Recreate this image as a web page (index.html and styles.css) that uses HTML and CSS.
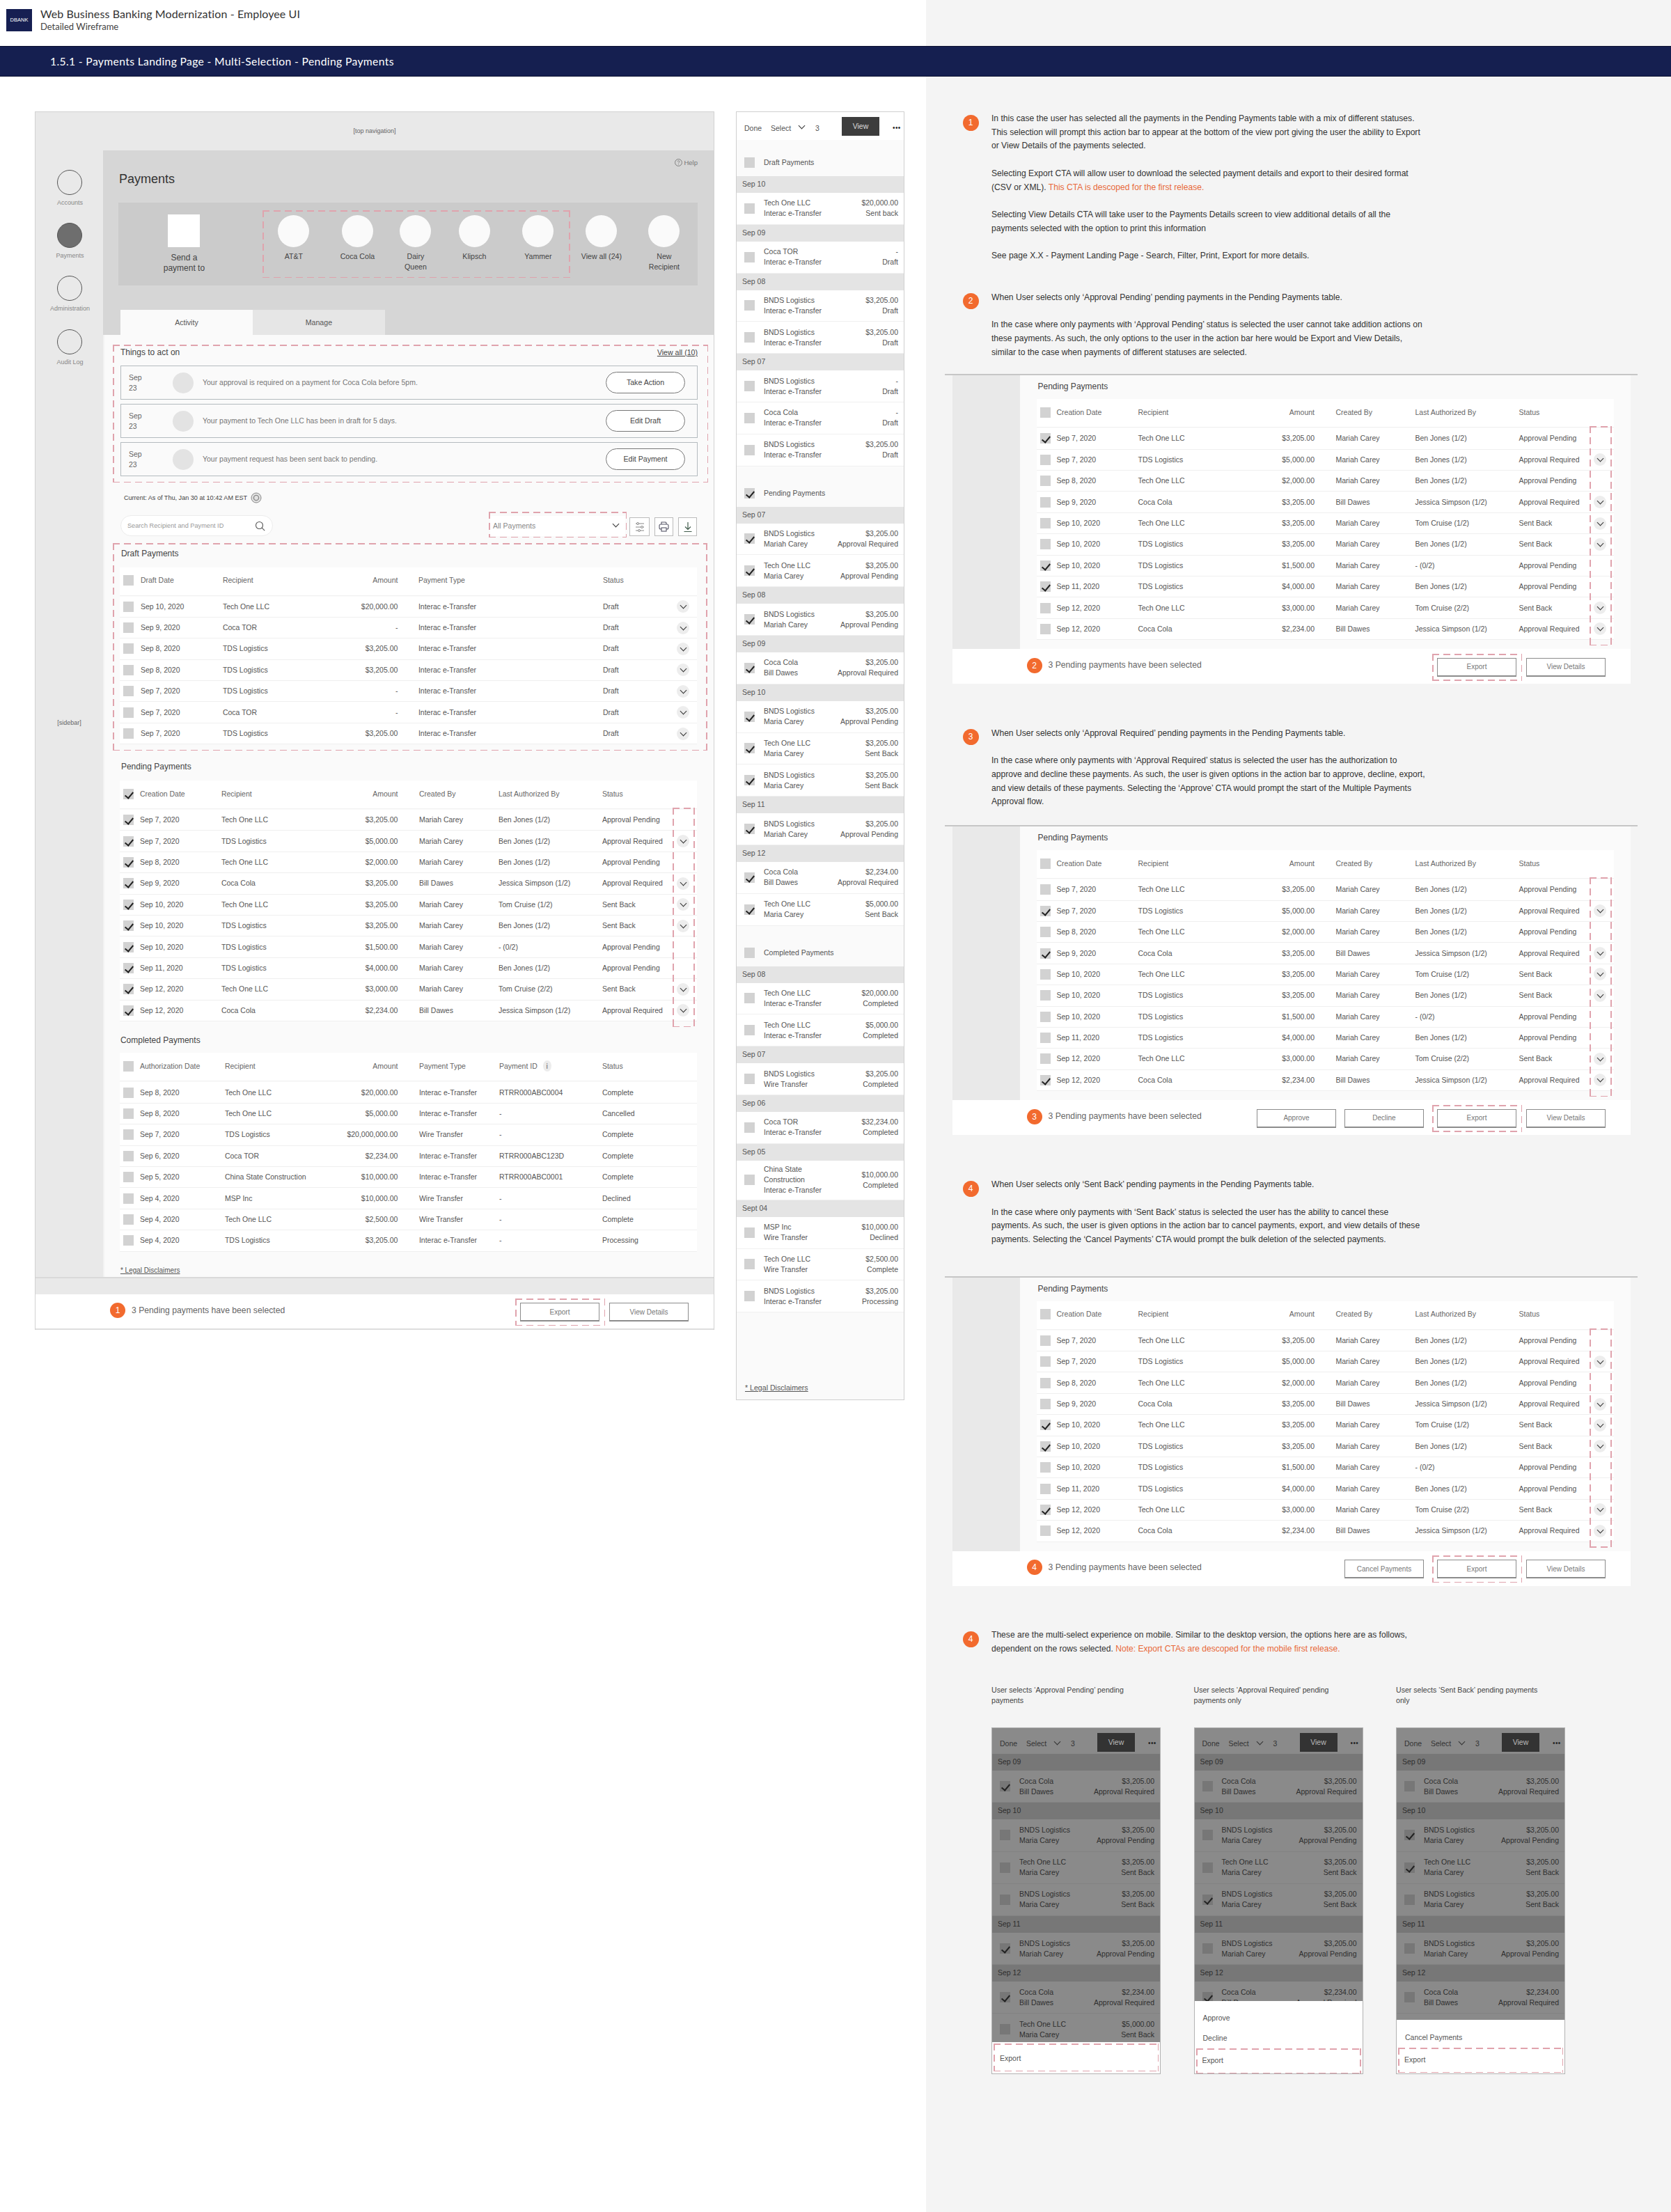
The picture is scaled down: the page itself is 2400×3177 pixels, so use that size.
FILE: index.html
```html
<!DOCTYPE html>
<html lang="en">
<head>
<meta charset="utf-8">
<title>Web Business Banking Modernization - Employee UI</title>
<link rel="stylesheet" href="styles.css">
</head>
<body>
<div class="page">
<header class="head"><div class="logo">DBANK</div><div><h1>Web Business Banking Modernization - Employee UI</h1><p>Detailed Wireframe</p></div></header>
<div class="head-r"></div>
<div class="band">1.5.1 - Payments Landing Page - Multi-Selection - Pending Payments</div>

<main class="left">
<div class="desk">
<div class="topnav">[top navigation]</div>
<div class="desk-body">
<aside class="side">
<div class="nav-item"><i></i>Accounts</div>
<div class="nav-item cur"><i></i>Payments</div>
<div class="nav-item"><i></i>Administration</div>
<div class="nav-item"><i></i>Audit Log</div>
<div class="side-note">[sidebar]</div>
</aside>
<div class="main">
<div class="hero">
<div class="help"><svg width="11" height="11" viewBox="0 0 12 12" fill="none" stroke="#777"><circle cx="6" cy="6" r="5.4"/><path d="M4.5 4.6a1.5 1.5 0 1 1 2.3 1.3c-.5.3-.8.6-.8 1.2M6 8.6v.8"/></svg>Help</div>
<h2 class="ptitle">Payments</h2>
<div class="card">
<div class="send"><i></i>Send a<br>payment to</div>
<div class="recips dash">
<div class="rcp"><i></i>AT&amp;T</div>
<div class="rcp"><i></i>Coca Cola</div>
<div class="rcp"><i></i>Dairy<br>Queen</div>
<div class="rcp"><i></i>Klipsch</div>
<div class="rcp"><i></i>Yammer</div>
</div>
<div class="rcp wide"><i></i>View all (24)</div>
<div class="rcp wide"><i></i>New<br>Recipient</div>
</div>
<div class="tabs"><div class="tab act">Activity</div><div class="tab">Manage</div></div>
</div>
<div class="panel">
<section class="things dash">
<div class="things-h"><span>Things to act on</span><a>View all (10)</a></div>
<div class="todo"><div class="td">Sep<br>23</div><i></i><p>Your approval is required on a payment for Coca Cola before 5pm.</p><button>Take Action</button></div>
<div class="todo"><div class="td">Sep<br>23</div><i></i><p>Your payment to Tech One LLC has been in draft for 5 days.</p><button>Edit Draft</button></div>
<div class="todo"><div class="td">Sep<br>23</div><i></i><p>Your payment request has been sent back to pending.</p><button>Edit Payment</button></div>
</section>
<div class="current">Current: As of Thu, Jan 30 at 10:42 AM EST <svg width="16" height="16" viewBox="0 0 16 16" fill="none" stroke="#888"><circle cx="8" cy="8" r="7" fill="#e2e2e2"/><circle cx="8" cy="8" r="3.6" stroke-width="1.4"/></svg></div>
<div class="tools">
<div class="search"><span>Search Recipient and Payment ID</span><svg width="15" height="15" viewBox="0 0 15 15" fill="none" stroke="#555" stroke-width="1.1"><circle cx="6.5" cy="6.5" r="5"/><path d="M10.2 10.2l4 4"/></svg></div>
<div class="select dash"><div class="select-in"><span>All Payments</span><b class="caret"></b></div></div>
<div class="ib first"><svg width="16" height="16" viewBox="0 0 16 16" fill="none" stroke="#888"><path d="M2 3h12M2 8h12M2 13h12"/><circle cx="5" cy="3" r="1.5" fill="#fff"/><circle cx="11" cy="8" r="1.5" fill="#fff"/><circle cx="7" cy="13" r="1.5" fill="#fff"/></svg></div>
<div class="ib"><svg width="17" height="17" viewBox="0 0 17 17" fill="none" stroke="#556" stroke-width="1.1"><path d="M5 5V2h6l1 1v2"/><rect x="2" y="5" width="13" height="7" rx="2"/><rect x="5" y="10" width="7" height="5" fill="#fff"/></svg></div>
<div class="ib"><svg width="16" height="16" viewBox="0 0 16 16" fill="none" stroke="#3f5a4a" stroke-width="1.2"><path d="M8 1v10M4 7.5L8 11.5l4-4M2.5 14.5h11"/></svg></div>
</div>
<section class="draft dash">
<h3>Draft Payments</h3>
<div class="tbl">
<div class="thead g-draft"><i class="cb"></i><span>Draft Date</span><span>Recipient</span><span class="amt">Amount</span><span>Payment Type</span><span>Status</span></div>
<div class="row g-draft"><i class="cb"></i><span>Sep 10, 2020</span><span>Tech One LLC</span><span class="amt">$20,000.00</span><span>Interac e-Transfer</span><span>Draft</span><b class="chev"></b></div>
<div class="row g-draft"><i class="cb"></i><span>Sep 9, 2020</span><span>Coca TOR</span><span class="amt">-</span><span>Interac e-Transfer</span><span>Draft</span><b class="chev"></b></div>
<div class="row g-draft"><i class="cb"></i><span>Sep 8, 2020</span><span>TDS Logistics</span><span class="amt">$3,205.00</span><span>Interac e-Transfer</span><span>Draft</span><b class="chev"></b></div>
<div class="row g-draft"><i class="cb"></i><span>Sep 8, 2020</span><span>TDS Logistics</span><span class="amt">$3,205.00</span><span>Interac e-Transfer</span><span>Draft</span><b class="chev"></b></div>
<div class="row g-draft"><i class="cb"></i><span>Sep 7, 2020</span><span>TDS Logistics</span><span class="amt">-</span><span>Interac e-Transfer</span><span>Draft</span><b class="chev"></b></div>
<div class="row g-draft"><i class="cb"></i><span>Sep 7, 2020</span><span>Coca TOR</span><span class="amt">-</span><span>Interac e-Transfer</span><span>Draft</span><b class="chev"></b></div>
<div class="row g-draft"><i class="cb"></i><span>Sep 7, 2020</span><span>TDS Logistics</span><span class="amt">$3,205.00</span><span>Interac e-Transfer</span><span>Draft</span><b class="chev"></b></div>
</div>
</section>
<section class="pending">
<h3>Pending Payments</h3>
<div class="tbl">
<div class="thead g-pend"><i class="cb on"></i><span>Creation Date</span><span>Recipient</span><span class="amt">Amount</span><span>Created By</span><span>Last Authorized By</span><span>Status</span></div>
<div class="rows">
<div class="col-mark dash"></div>
<div class="row g-pend"><i class="cb on"></i><span>Sep 7, 2020</span><span>Tech One LLC</span><span class="amt">$3,205.00</span><span>Mariah Carey</span><span>Ben Jones (1/2)</span><span>Approval Pending</span></div>
<div class="row g-pend"><i class="cb on"></i><span>Sep 7, 2020</span><span>TDS Logistics</span><span class="amt">$5,000.00</span><span>Mariah Carey</span><span>Ben Jones (1/2)</span><span>Approval Required</span><b class="chev"></b></div>
<div class="row g-pend"><i class="cb on"></i><span>Sep 8, 2020</span><span>Tech One LLC</span><span class="amt">$2,000.00</span><span>Mariah Carey</span><span>Ben Jones (1/2)</span><span>Approval Pending</span></div>
<div class="row g-pend"><i class="cb on"></i><span>Sep 9, 2020</span><span>Coca Cola</span><span class="amt">$3,205.00</span><span>Bill Dawes</span><span>Jessica Simpson (1/2)</span><span>Approval Required</span><b class="chev"></b></div>
<div class="row g-pend"><i class="cb on"></i><span>Sep 10, 2020</span><span>Tech One LLC</span><span class="amt">$3,205.00</span><span>Mariah Carey</span><span>Tom Cruise (1/2)</span><span>Sent Back</span><b class="chev"></b></div>
<div class="row g-pend"><i class="cb on"></i><span>Sep 10, 2020</span><span>TDS Logistics</span><span class="amt">$3,205.00</span><span>Mariah Carey</span><span>Ben Jones (1/2)</span><span>Sent Back</span><b class="chev"></b></div>
<div class="row g-pend"><i class="cb on"></i><span>Sep 10, 2020</span><span>TDS Logistics</span><span class="amt">$1,500.00</span><span>Mariah Carey</span><span>- (0/2)</span><span>Approval Pending</span></div>
<div class="row g-pend"><i class="cb on"></i><span>Sep 11, 2020</span><span>TDS Logistics</span><span class="amt">$4,000.00</span><span>Mariah Carey</span><span>Ben Jones (1/2)</span><span>Approval Pending</span></div>
<div class="row g-pend"><i class="cb on"></i><span>Sep 12, 2020</span><span>Tech One LLC</span><span class="amt">$3,000.00</span><span>Mariah Carey</span><span>Tom Cruise (2/2)</span><span>Sent Back</span><b class="chev"></b></div>
<div class="row g-pend"><i class="cb on"></i><span>Sep 12, 2020</span><span>Coca Cola</span><span class="amt">$2,234.00</span><span>Bill Dawes</span><span>Jessica Simpson (1/2)</span><span>Approval Required</span><b class="chev"></b></div>
</div>
</div>
</section>
<section class="completed">
<h3>Completed Payments</h3>
<div class="tbl">
<div class="thead g-comp"><i class="cb"></i><span>Authorization Date</span><span>Recipient</span><span class="amt">Amount</span><span>Payment Type</span><span>Payment ID <em class="info">i</em></span><span>Status</span></div>
<div class="row g-comp"><i class="cb"></i><span>Sep 8, 2020</span><span>Tech One LLC</span><span class="amt">$20,000.00</span><span>Interac e-Transfer</span><span>RTRR000ABC0004</span><span>Complete</span></div>
<div class="row g-comp"><i class="cb"></i><span>Sep 8, 2020</span><span>Tech One LLC</span><span class="amt">$5,000.00</span><span>Interac e-Transfer</span><span>-</span><span>Cancelled</span></div>
<div class="row g-comp"><i class="cb"></i><span>Sep 7, 2020</span><span>TDS Logistics</span><span class="amt">$20,000,000.00</span><span>Wire Transfer</span><span>-</span><span>Complete</span></div>
<div class="row g-comp"><i class="cb"></i><span>Sep 6, 2020</span><span>Coca TOR</span><span class="amt">$2,234.00</span><span>Interac e-Transfer</span><span>RTRR000ABC123D</span><span>Complete</span></div>
<div class="row g-comp"><i class="cb"></i><span>Sep 5, 2020</span><span>China State Construction</span><span class="amt">$10,000.00</span><span>Interac e-Transfer</span><span>RTRR000ABC0001</span><span>Complete</span></div>
<div class="row g-comp"><i class="cb"></i><span>Sep 4, 2020</span><span>MSP Inc</span><span class="amt">$10,000.00</span><span>Wire Transfer</span><span>-</span><span>Declined</span></div>
<div class="row g-comp"><i class="cb"></i><span>Sep 4, 2020</span><span>Tech One LLC</span><span class="amt">$2,500.00</span><span>Wire Transfer</span><span>-</span><span>Complete</span></div>
<div class="row g-comp"><i class="cb"></i><span>Sep 4, 2020</span><span>TDS Logistics</span><span class="amt">$3,205.00</span><span>Interac e-Transfer</span><span>-</span><span>Processing</span></div>
</div>
</section>
<a class="legal">* Legal Disclaimers</a>
</div>
</div>
</div>
<div class="strip"></div>
<div class="abar"><span class="badge">1</span><span class="abar-t">3 Pending payments have been selected</span><div class="abtns"><div class="bwrap dash"><button>Export</button></div><button>View Details</button></div></div>
</div>

<div class="phone">
<div class="mhead"><span class="m-done">Done</span><span class="m-sel">Select</span><b class="caret m-car"></b><span class="m-n">3</span><span class="m-view">View</span><span class="m-dots">•••</span></div>
<div class="msec"><i class="cb"></i>Draft Payments</div>
<div class="mband">Sep 10</div>
<div class="mrow"><i class="cb"></i><div>Tech One LLC<br>Interac e-Transfer</div><div class="r">$20,000.00<br>Sent back</div></div>
<div class="mband">Sep 09</div>
<div class="mrow"><i class="cb"></i><div>Coca TOR<br>Interac e-Transfer</div><div class="r">-<br>Draft</div></div>
<div class="mband">Sep 08</div>
<div class="mrow"><i class="cb"></i><div>BNDS Logistics<br>Interac e-Transfer</div><div class="r">$3,205.00<br>Draft</div></div>
<div class="mrow"><i class="cb"></i><div>BNDS Logistics<br>Interac e-Transfer</div><div class="r">$3,205.00<br>Draft</div></div>
<div class="mband">Sep 07</div>
<div class="mrow"><i class="cb"></i><div>BNDS Logistics<br>Interac e-Transfer</div><div class="r">-<br>Draft</div></div>
<div class="mrow"><i class="cb"></i><div>Coca Cola<br>Interac e-Transfer</div><div class="r">-<br>Draft</div></div>
<div class="mrow"><i class="cb"></i><div>BNDS Logistics<br>Interac e-Transfer</div><div class="r">$3,205.00<br>Draft</div></div>
<div class="msec tall"><i class="cb on"></i>Pending Payments</div>
<div class="mband">Sep 07</div>
<div class="mrow"><i class="cb on"></i><div>BNDS Logistics<br>Mariah Carey</div><div class="r">$3,205.00<br>Approval Required</div></div>
<div class="mrow"><i class="cb on"></i><div>Tech One LLC<br>Maria Carey</div><div class="r">$3,205.00<br>Approval Pending</div></div>
<div class="mband">Sep 08</div>
<div class="mrow"><i class="cb on"></i><div>BNDS Logistics<br>Mariah Carey</div><div class="r">$3,205.00<br>Approval Pending</div></div>
<div class="mband">Sep 09</div>
<div class="mrow"><i class="cb on"></i><div>Coca Cola<br>Bill Dawes</div><div class="r">$3,205.00<br>Approval Required</div></div>
<div class="mband">Sep 10</div>
<div class="mrow"><i class="cb on"></i><div>BNDS Logistics<br>Maria Carey</div><div class="r">$3,205.00<br>Approval Pending</div></div>
<div class="mrow"><i class="cb on"></i><div>Tech One LLC<br>Maria Carey</div><div class="r">$3,205.00<br>Sent Back</div></div>
<div class="mrow"><i class="cb on"></i><div>BNDS Logistics<br>Maria Carey</div><div class="r">$3,205.00<br>Sent Back</div></div>
<div class="mband">Sep 11</div>
<div class="mrow"><i class="cb on"></i><div>BNDS Logistics<br>Mariah Carey</div><div class="r">$3,205.00<br>Approval Pending</div></div>
<div class="mband">Sep 12</div>
<div class="mrow"><i class="cb on"></i><div>Coca Cola<br>Bill Dawes</div><div class="r">$2,234.00<br>Approval Required</div></div>
<div class="mrow"><i class="cb on"></i><div>Tech One LLC<br>Maria Carey</div><div class="r">$5,000.00<br>Sent Back</div></div>
<div class="msec tall"><i class="cb"></i>Completed Payments</div>
<div class="mband">Sep 08</div>
<div class="mrow"><i class="cb"></i><div>Tech One LLC<br>Interac e-Transfer</div><div class="r">$20,000.00<br>Completed</div></div>
<div class="mrow"><i class="cb"></i><div>Tech One LLC<br>Interac e-Transfer</div><div class="r">$5,000.00<br>Completed</div></div>
<div class="mband">Sep 07</div>
<div class="mrow"><i class="cb"></i><div>BNDS Logistics<br>Wire Transfer</div><div class="r">$3,205.00<br>Completed</div></div>
<div class="mband">Sep 06</div>
<div class="mrow"><i class="cb"></i><div>Coca TOR<br>Interac e-Transfer</div><div class="r">$32,234.00<br>Completed</div></div>
<div class="mband">Sep 05</div>
<div class="mrow three"><i class="cb"></i><div>China State<br>Construction<br>Interac e-Transfer</div><div class="r">$10,000.00<br>Completed</div></div>
<div class="mband">Sept 04</div>
<div class="mrow"><i class="cb"></i><div>MSP Inc<br>Wire Transfer</div><div class="r">$10,000.00<br>Declined</div></div>
<div class="mrow"><i class="cb"></i><div>Tech One LLC<br>Wire Transfer</div><div class="r">$2,500.00<br>Complete</div></div>
<div class="mrow"><i class="cb"></i><div>BNDS Logistics<br>Interac e-Transfer</div><div class="r">$3,205.00<br>Processing</div></div>
<a class="mlegal">* Legal Disclaimers</a>
</div>
</main>

<aside class="right">
<div class="note n1"><span class="badge">1</span><p>In this case the user has selected all the payments in the Pending Payments table with a mix of different statuses.<br>This selection will prompt this action bar to appear at the bottom of the view port giving the user the ability to Export<br>or View Details of the payments selected.<br><br>Selecting Export CTA will allow user to download the selected payment details and export to their desired format<br>(CSV or XML). <em>This CTA is descoped for the first release.</em><br><br>Selecting View Details CTA will take user to the Payments Details screen to view additional details of all the<br>payments selected with the option to print this information<br><br>See page X.X - Payment Landing Page - Search, Filter, Print, Export for more details.</p></div>
<div class="note n2"><span class="badge">2</span><p>When User selects only ‘Approval Pending’ pending payments in the Pending Payments table.<br><br>In the case where only payments with ‘Approval Pending’ status is selected the user cannot take addition actions on<br>these payments. As such, the only options to the user in the action bar here would be Export and View Details,<br>similar to the case when payments of different statuses are selected.</p></div>
<div class="mock m2">
<div class="mock-body"><div class="mock-side"></div><div class="mock-main">
<h3>Pending Payments</h3>
<div class="tbl">
<div class="thead g-pend"><i class="cb"></i><span>Creation Date</span><span>Recipient</span><span class="amt">Amount</span><span>Created By</span><span>Last Authorized By</span><span>Status</span></div>
<div class="rows">
<div class="col-mark dash"></div>
<div class="row g-pend"><i class="cb on"></i><span>Sep 7, 2020</span><span>Tech One LLC</span><span class="amt">$3,205.00</span><span>Mariah Carey</span><span>Ben Jones (1/2)</span><span>Approval Pending</span></div>
<div class="row g-pend"><i class="cb"></i><span>Sep 7, 2020</span><span>TDS Logistics</span><span class="amt">$5,000.00</span><span>Mariah Carey</span><span>Ben Jones (1/2)</span><span>Approval Required</span><b class="chev"></b></div>
<div class="row g-pend"><i class="cb"></i><span>Sep 8, 2020</span><span>Tech One LLC</span><span class="amt">$2,000.00</span><span>Mariah Carey</span><span>Ben Jones (1/2)</span><span>Approval Pending</span></div>
<div class="row g-pend"><i class="cb"></i><span>Sep 9, 2020</span><span>Coca Cola</span><span class="amt">$3,205.00</span><span>Bill Dawes</span><span>Jessica Simpson (1/2)</span><span>Approval Required</span><b class="chev"></b></div>
<div class="row g-pend"><i class="cb"></i><span>Sep 10, 2020</span><span>Tech One LLC</span><span class="amt">$3,205.00</span><span>Mariah Carey</span><span>Tom Cruise (1/2)</span><span>Sent Back</span><b class="chev"></b></div>
<div class="row g-pend"><i class="cb"></i><span>Sep 10, 2020</span><span>TDS Logistics</span><span class="amt">$3,205.00</span><span>Mariah Carey</span><span>Ben Jones (1/2)</span><span>Sent Back</span><b class="chev"></b></div>
<div class="row g-pend"><i class="cb on"></i><span>Sep 10, 2020</span><span>TDS Logistics</span><span class="amt">$1,500.00</span><span>Mariah Carey</span><span>- (0/2)</span><span>Approval Pending</span></div>
<div class="row g-pend"><i class="cb on"></i><span>Sep 11, 2020</span><span>TDS Logistics</span><span class="amt">$4,000.00</span><span>Mariah Carey</span><span>Ben Jones (1/2)</span><span>Approval Pending</span></div>
<div class="row g-pend"><i class="cb"></i><span>Sep 12, 2020</span><span>Tech One LLC</span><span class="amt">$3,000.00</span><span>Mariah Carey</span><span>Tom Cruise (2/2)</span><span>Sent Back</span><b class="chev"></b></div>
<div class="row g-pend"><i class="cb"></i><span>Sep 12, 2020</span><span>Coca Cola</span><span class="amt">$2,234.00</span><span>Bill Dawes</span><span>Jessica Simpson (1/2)</span><span>Approval Required</span><b class="chev"></b></div>
</div></div>
</div></div>
<div class="abar"><span class="badge">2</span><span class="abar-t">3 Pending payments have been selected</span><div class="abtns"><div class="bwrap dash"><button>Export</button></div><button>View Details</button></div></div>
</div>
<div class="note n3"><span class="badge">3</span><p>When User selects only ‘Approval Required’ pending payments in the Pending Payments table.<br><br>In the case where only payments with ‘Approval Required’ status is selected the user has the authorization to<br>approve and decline these payments. As such, the user is given options in the action bar to approve, decline, export,<br>and view details of these payments. Selecting the ‘Approve’ CTA would prompt the start of the Multiple Payments<br>Approval flow.</p></div>
<div class="mock m3">
<div class="mock-body"><div class="mock-side"></div><div class="mock-main">
<h3>Pending Payments</h3>
<div class="tbl">
<div class="thead g-pend"><i class="cb"></i><span>Creation Date</span><span>Recipient</span><span class="amt">Amount</span><span>Created By</span><span>Last Authorized By</span><span>Status</span></div>
<div class="rows">
<div class="col-mark dash"></div>
<div class="row g-pend"><i class="cb"></i><span>Sep 7, 2020</span><span>Tech One LLC</span><span class="amt">$3,205.00</span><span>Mariah Carey</span><span>Ben Jones (1/2)</span><span>Approval Pending</span></div>
<div class="row g-pend"><i class="cb on"></i><span>Sep 7, 2020</span><span>TDS Logistics</span><span class="amt">$5,000.00</span><span>Mariah Carey</span><span>Ben Jones (1/2)</span><span>Approval Required</span><b class="chev"></b></div>
<div class="row g-pend"><i class="cb"></i><span>Sep 8, 2020</span><span>Tech One LLC</span><span class="amt">$2,000.00</span><span>Mariah Carey</span><span>Ben Jones (1/2)</span><span>Approval Pending</span></div>
<div class="row g-pend"><i class="cb on"></i><span>Sep 9, 2020</span><span>Coca Cola</span><span class="amt">$3,205.00</span><span>Bill Dawes</span><span>Jessica Simpson (1/2)</span><span>Approval Required</span><b class="chev"></b></div>
<div class="row g-pend"><i class="cb"></i><span>Sep 10, 2020</span><span>Tech One LLC</span><span class="amt">$3,205.00</span><span>Mariah Carey</span><span>Tom Cruise (1/2)</span><span>Sent Back</span><b class="chev"></b></div>
<div class="row g-pend"><i class="cb"></i><span>Sep 10, 2020</span><span>TDS Logistics</span><span class="amt">$3,205.00</span><span>Mariah Carey</span><span>Ben Jones (1/2)</span><span>Sent Back</span><b class="chev"></b></div>
<div class="row g-pend"><i class="cb"></i><span>Sep 10, 2020</span><span>TDS Logistics</span><span class="amt">$1,500.00</span><span>Mariah Carey</span><span>- (0/2)</span><span>Approval Pending</span></div>
<div class="row g-pend"><i class="cb"></i><span>Sep 11, 2020</span><span>TDS Logistics</span><span class="amt">$4,000.00</span><span>Mariah Carey</span><span>Ben Jones (1/2)</span><span>Approval Pending</span></div>
<div class="row g-pend"><i class="cb"></i><span>Sep 12, 2020</span><span>Tech One LLC</span><span class="amt">$3,000.00</span><span>Mariah Carey</span><span>Tom Cruise (2/2)</span><span>Sent Back</span><b class="chev"></b></div>
<div class="row g-pend"><i class="cb on"></i><span>Sep 12, 2020</span><span>Coca Cola</span><span class="amt">$2,234.00</span><span>Bill Dawes</span><span>Jessica Simpson (1/2)</span><span>Approval Required</span><b class="chev"></b></div>
</div></div>
</div></div>
<div class="abar"><span class="badge">3</span><span class="abar-t">3 Pending payments have been selected</span><div class="abtns"><button>Approve</button><button>Decline</button><div class="bwrap dash"><button>Export</button></div><button>View Details</button></div></div>
</div>
<div class="note n4"><span class="badge">4</span><p>When User selects only ‘Sent Back’ pending payments in the Pending Payments table.<br><br>In the case where only payments with ‘Sent Back’ status is selected the user has the ability to cancel these<br>payments. As such, the user is given options in the action bar to cancel payments, export, and view details of these<br>payments. Selecting the ‘Cancel Payments’ CTA would prompt the bulk deletion of the selected payments.</p></div>
<div class="mock m4">
<div class="mock-body"><div class="mock-side"></div><div class="mock-main">
<h3>Pending Payments</h3>
<div class="tbl">
<div class="thead g-pend"><i class="cb"></i><span>Creation Date</span><span>Recipient</span><span class="amt">Amount</span><span>Created By</span><span>Last Authorized By</span><span>Status</span></div>
<div class="rows">
<div class="col-mark dash"></div>
<div class="row g-pend"><i class="cb"></i><span>Sep 7, 2020</span><span>Tech One LLC</span><span class="amt">$3,205.00</span><span>Mariah Carey</span><span>Ben Jones (1/2)</span><span>Approval Pending</span></div>
<div class="row g-pend"><i class="cb"></i><span>Sep 7, 2020</span><span>TDS Logistics</span><span class="amt">$5,000.00</span><span>Mariah Carey</span><span>Ben Jones (1/2)</span><span>Approval Required</span><b class="chev"></b></div>
<div class="row g-pend"><i class="cb"></i><span>Sep 8, 2020</span><span>Tech One LLC</span><span class="amt">$2,000.00</span><span>Mariah Carey</span><span>Ben Jones (1/2)</span><span>Approval Pending</span></div>
<div class="row g-pend"><i class="cb"></i><span>Sep 9, 2020</span><span>Coca Cola</span><span class="amt">$3,205.00</span><span>Bill Dawes</span><span>Jessica Simpson (1/2)</span><span>Approval Required</span><b class="chev"></b></div>
<div class="row g-pend"><i class="cb on"></i><span>Sep 10, 2020</span><span>Tech One LLC</span><span class="amt">$3,205.00</span><span>Mariah Carey</span><span>Tom Cruise (1/2)</span><span>Sent Back</span><b class="chev"></b></div>
<div class="row g-pend"><i class="cb on"></i><span>Sep 10, 2020</span><span>TDS Logistics</span><span class="amt">$3,205.00</span><span>Mariah Carey</span><span>Ben Jones (1/2)</span><span>Sent Back</span><b class="chev"></b></div>
<div class="row g-pend"><i class="cb"></i><span>Sep 10, 2020</span><span>TDS Logistics</span><span class="amt">$1,500.00</span><span>Mariah Carey</span><span>- (0/2)</span><span>Approval Pending</span></div>
<div class="row g-pend"><i class="cb"></i><span>Sep 11, 2020</span><span>TDS Logistics</span><span class="amt">$4,000.00</span><span>Mariah Carey</span><span>Ben Jones (1/2)</span><span>Approval Pending</span></div>
<div class="row g-pend"><i class="cb on"></i><span>Sep 12, 2020</span><span>Tech One LLC</span><span class="amt">$3,000.00</span><span>Mariah Carey</span><span>Tom Cruise (2/2)</span><span>Sent Back</span><b class="chev"></b></div>
<div class="row g-pend"><i class="cb"></i><span>Sep 12, 2020</span><span>Coca Cola</span><span class="amt">$2,234.00</span><span>Bill Dawes</span><span>Jessica Simpson (1/2)</span><span>Approval Required</span><b class="chev"></b></div>
</div></div>
</div></div>
<div class="abar"><span class="badge">4</span><span class="abar-t">3 Pending payments have been selected</span><div class="abtns"><button>Cancel Payments</button><div class="bwrap dash"><button>Export</button></div><button>View Details</button></div></div>
</div>
<div class="note n5"><span class="badge">4</span><p>These are the multi-select experience on mobile. Similar to the desktop version, the options here are as follows,<br>dependent on the rows selected. <em>Note: Export CTAs are descoped for the mobile first release.</em></p></div>
<div class="mobiles">
<div class="mcol">
<p class="mlabel">User selects ‘Approval Pending’ pending<br>payments</p>
<div class="ophone">
<div class="mhead"><span class="m-done">Done</span><span class="m-sel">Select</span><b class="caret m-car"></b><span class="m-n">3</span><span class="m-view">View</span><span class="m-dots">•••</span></div>
<div class="mband">Sep 09</div>
<div class="mrow"><i class="cb on"></i><div>Coca Cola<br>Bill Dawes</div><div class="r">$3,205.00<br>Approval Required</div></div>
<div class="mband">Sep 10</div>
<div class="mrow"><i class="cb"></i><div>BNDS Logistics<br>Maria Carey</div><div class="r">$3,205.00<br>Approval Pending</div></div>
<div class="mrow"><i class="cb"></i><div>Tech One LLC<br>Maria Carey</div><div class="r">$3,205.00<br>Sent Back</div></div>
<div class="mrow"><i class="cb"></i><div>BNDS Logistics<br>Maria Carey</div><div class="r">$3,205.00<br>Sent Back</div></div>
<div class="mband">Sep 11</div>
<div class="mrow"><i class="cb on"></i><div>BNDS Logistics<br>Mariah Carey</div><div class="r">$3,205.00<br>Approval Pending</div></div>
<div class="mband">Sep 12</div>
<div class="mrow"><i class="cb on"></i><div>Coca Cola<br>Bill Dawes</div><div class="r">$2,234.00<br>Approval Required</div></div>
<div class="mrow"><i class="cb"></i><div>Tech One LLC<br>Maria Carey</div><div class="r">$5,000.00<br>Sent Back</div></div>
<div class="sheet"><div class="sheet-x dash">Export</div></div>
</div>
</div>
<div class="mcol">
<p class="mlabel">User selects ‘Approval Required’ pending<br>payments only</p>
<div class="ophone">
<div class="mhead"><span class="m-done">Done</span><span class="m-sel">Select</span><b class="caret m-car"></b><span class="m-n">3</span><span class="m-view">View</span><span class="m-dots">•••</span></div>
<div class="mband">Sep 09</div>
<div class="mrow"><i class="cb"></i><div>Coca Cola<br>Bill Dawes</div><div class="r">$3,205.00<br>Approval Required</div></div>
<div class="mband">Sep 10</div>
<div class="mrow"><i class="cb"></i><div>BNDS Logistics<br>Maria Carey</div><div class="r">$3,205.00<br>Approval Pending</div></div>
<div class="mrow"><i class="cb"></i><div>Tech One LLC<br>Maria Carey</div><div class="r">$3,205.00<br>Sent Back</div></div>
<div class="mrow"><i class="cb on"></i><div>BNDS Logistics<br>Maria Carey</div><div class="r">$3,205.00<br>Sent Back</div></div>
<div class="mband">Sep 11</div>
<div class="mrow"><i class="cb"></i><div>BNDS Logistics<br>Mariah Carey</div><div class="r">$3,205.00<br>Approval Pending</div></div>
<div class="mband">Sep 12</div>
<div class="mrow"><i class="cb on"></i><div>Coca Cola<br>Bill Dawes</div><div class="r">$2,234.00<br>Approval Required</div></div>
<div class="mrow"><i class="cb"></i><div>Tech One LLC<br>Maria Carey</div><div class="r">$5,000.00<br>Sent Back</div></div>
<div class="sheet tall2"><div class="sheet-i">Approve</div><div class="sheet-i">Decline</div><div class="sheet-x dash">Export</div></div>
</div>
</div>
<div class="mcol">
<p class="mlabel">User selects ‘Sent Back’ pending payments<br>only</p>
<div class="ophone">
<div class="mhead"><span class="m-done">Done</span><span class="m-sel">Select</span><b class="caret m-car"></b><span class="m-n">3</span><span class="m-view">View</span><span class="m-dots">•••</span></div>
<div class="mband">Sep 09</div>
<div class="mrow"><i class="cb"></i><div>Coca Cola<br>Bill Dawes</div><div class="r">$3,205.00<br>Approval Required</div></div>
<div class="mband">Sep 10</div>
<div class="mrow"><i class="cb on"></i><div>BNDS Logistics<br>Maria Carey</div><div class="r">$3,205.00<br>Approval Pending</div></div>
<div class="mrow"><i class="cb on"></i><div>Tech One LLC<br>Maria Carey</div><div class="r">$3,205.00<br>Sent Back</div></div>
<div class="mrow"><i class="cb"></i><div>BNDS Logistics<br>Maria Carey</div><div class="r">$3,205.00<br>Sent Back</div></div>
<div class="mband">Sep 11</div>
<div class="mrow"><i class="cb"></i><div>BNDS Logistics<br>Mariah Carey</div><div class="r">$3,205.00<br>Approval Pending</div></div>
<div class="mband">Sep 12</div>
<div class="mrow"><i class="cb"></i><div>Coca Cola<br>Bill Dawes</div><div class="r">$2,234.00<br>Approval Required</div></div>
<div class="mrow"><i class="cb"></i><div>Tech One LLC<br>Maria Carey</div><div class="r">$5,000.00<br>Sent Back</div></div>
<div class="sheet tall1"><div class="sheet-i">Cancel Payments</div><div class="sheet-x dash">Export</div></div>
</div>
</div>
</div>
</aside>
</div>
</body>
</html>
```

FILE: styles.css
```css
*{box-sizing:border-box}
html,body{margin:0;background:#fff}
body{font:10.5px/15px "Liberation Sans",Arial,sans-serif;color:#555}
h1,h2,h3,p{margin:0;font-weight:400}
i,b,em{font-style:normal;font-weight:400}
button{font:inherit;background:#fff;color:#777;padding:0}
.page{width:2400px;height:3177px;display:grid;grid-template-columns:1330px 1070px;grid-template-rows:66px 44px 1fr;overflow:hidden}

.dash{--d:#e0a3ad;background-image:linear-gradient(90deg,var(--d) 10px,transparent 0),linear-gradient(90deg,var(--d) 10px,transparent 0),linear-gradient(var(--d) 10px,transparent 0),linear-gradient(var(--d) 10px,transparent 0);background-size:16px 1.5px,16px 1.5px,1.5px 16px,1.5px 16px;background-position:0 0,0 100%,0 0,100% 0;background-repeat:repeat-x,repeat-x,repeat-y,repeat-y}

.head{display:flex;align-items:flex-start;padding:13px 0 0 9px;gap:12px;font-family:Lato,sans-serif;color:#333}
.logo{width:37px;height:32px;background:#161f52;color:#fff;font:7.5px/32px "Liberation Sans",sans-serif;text-align:center}
.head h1{font-size:16px;line-height:17px;letter-spacing:.1px;margin-top:-2px}
.head p{font-size:13px;line-height:16px;margin-top:2px;color:#444}
.head-r{background:#f4f4f4}
.band{grid-column:1/3;background:#151f50;border-top:1px solid #0a0f30;border-bottom:1px solid #0a0f30;color:#fff;font:15.7px/42px Lato,sans-serif;padding-left:72px;letter-spacing:.35px}

.left{padding:50px 0 0 50px;display:flex;align-items:flex-start}
.right{background:#f4f4f4;color:#333;padding-top:51px;font-size:12.1px;line-height:19.7px}

.desk{width:976px;border:1px solid #d2d2d2;border-width:1px 1px 0;display:flex;flex-direction:column}
.topnav{height:55px;background:#e9e9e9;text-align:center;font-size:9px;line-height:54px;color:#666}
.desk-body{display:flex}
.side{width:97px;background:#e9e9e9;padding:28px 0 0 2px;color:#888;font-size:9px;text-align:center}
.nav-item{height:53px;margin-bottom:23.2px;line-height:12px;display:flex;flex-direction:column;align-items:center}
.nav-item i{width:36px;height:36px;border:1px solid #555;border-radius:50%;margin-bottom:5px}
.nav-item.cur i{background:#6e6e6e}
.side-note{margin:506px 0 0 -2px;line-height:12px;color:#666}
.main{width:878px}
.hero{height:265px;background:#d6d6d6;padding:10px 23px 0 22px}
.help{height:14px;display:flex;justify-content:flex-end;align-items:center;gap:2px;font-size:9.5px;color:#777}
.ptitle{font-size:18px;line-height:22px;margin:6px 0 0 1px;color:#333}
.card{display:flex;height:119px;margin-top:23px;background:#cbcbcb;align-items:flex-start;color:#444;text-align:center}
.send{width:207px;padding:17px 18px 0 0;font-size:12px;line-height:15px}
.send i{display:block;width:46px;height:47px;background:#fff;margin:0 auto 8px}
.recips{display:grid;grid-template-columns:90px 93px 74px 95px 88px;width:442px;height:97px;margin-top:11px;padding-top:7px}
.rcp i{display:block;width:45px;height:46px;border-radius:50%;background:#fafafa;margin:0 auto 6px}
.rcp{font-size:10.6px;line-height:15px}
.wide{width:90px;padding-top:18px}
.tabs{display:flex;margin:35px 0 0 3px}
.tab{width:190px;height:36px;background:#e6e6e6;text-align:center;line-height:36px;font-size:10.6px;color:#555}
.tab.act{background:#fafafa}

.panel{height:1353px;background:#fafafa;padding:14px 8px 0 14px;border-left:2px solid #f2f2f2}
.things{padding:3px 15px 9px 11px;height:198px;margin-left:-2px}
.things-h{display:flex;justify-content:space-between;align-items:center;height:16px;margin:0 0 11px;font-size:12px;color:#444}
.things-h a,.legal,.mlegal{text-decoration:underline;font-size:10.6px}
.todo{height:49px;margin-bottom:6px;border:1px solid #b4bbbf;display:flex;align-items:center;padding-left:11px;font-size:10.5px;color:#777}
.td{width:63px;line-height:15px;color:#666}
.todo i{width:30px;height:30px;border-radius:50%;background:#e3e3e3;margin-right:13px}
.todo p{flex:1}
.todo button{width:114px;height:31px;border:1px solid #777;border-radius:16px;margin-right:17px;color:#444;font-size:10.6px}
.current{height:14px;margin:15px 0 0 14px;display:flex;align-items:center;gap:5px;font-size:9.1px;color:#444}
.tools{display:flex;align-items:flex-start;height:37px;margin:13px 16px 0 9px}
.search{width:219px;height:30px;margin-top:5px;border:1px solid #ececec;border-radius:15px;background:#fff;display:flex;align-items:center;justify-content:space-between;padding:0 10px 0 9px;font-size:9.2px;color:#999}
.select{margin-left:auto;width:198px;height:37px;padding:6px 2px 2px}
.select-in{height:29px;background:#fff;display:flex;align-items:center;justify-content:space-between;padding:0 9px 0 4px;font-size:10.5px;color:#888}
.ib{width:27px;height:27px;margin:8px 0 0 7px;border:1px solid #bbb;background:#fff;display:flex;align-items:center;justify-content:center}
.ib.first{width:29px;margin-left:4px}
h3{font-size:12px;line-height:16px;color:#444}
.draft{width:854px;margin:7.5px 0 0 -2px;padding:7px 15px 9.6px 12px;height:298.5px}
.draft h3{margin-bottom:12px}
.draft .tbl{margin-left:-2px}
.pending{margin:15px 0 0 8px}
.pending h3{margin:0 0 12px 2px}
.completed{margin:19.5px 0 0 8px}
.completed h3{margin:0 0 10px 1px}
.legal{display:block;margin:20px 0 0 9px;line-height:13px;font-size:10px}

.tbl{width:829px}
.thead,.row{display:grid;align-items:center;background:#fff;white-space:nowrap}
.thead{height:41px;padding-bottom:2px;margin-bottom:1px;border-bottom:1px solid #f1f1f1;color:#666}
.row{height:30.4px;border-bottom:1px solid #efefef;color:#555}
.g-draft{grid-template-columns:30px 118px 112px 169px 265px 100px 35px}
.g-draft .amt{padding-right:29.5px}
.g-pend{grid-template-columns:29px 117px 112px 172px 114px 149px 101px 35px}
.g-comp{grid-template-columns:29px 122px 107px 172px 115px 148px 136px}
.amt{text-align:right;padding-right:30.5px}
.cb{position:relative;display:block;width:15px;height:15px;background:#d2d2d2}
.row .cb,.thead .cb{margin-left:5px}
.cb.on::after{content:"";position:absolute;left:5px;top:2px;width:5px;height:10px;border:solid #222;border-width:0 2px 2px 0;transform:rotate(40deg)}
.chev{position:relative;display:block;width:18px;height:18px;border-radius:50%;background:#ededed;margin-left:6px}
.chev::after,.caret::after{content:"";position:absolute;left:6px;top:4px;width:6px;height:6px;border:solid #333;border-width:0 1.4px 1.4px 0;transform:rotate(45deg)}
.caret{position:relative;display:block;width:10px;height:8px}
.caret::after{left:2px;top:-3px}
.rows{position:relative}
.col-mark{position:absolute;left:794px;top:-3px;width:32px;height:315px;z-index:1;pointer-events:none}
.info{display:inline-block;width:12px;height:16px;border-radius:50%;background:#ececec;text-align:center;margin-left:5px;line-height:16px}

.strip{height:25px;background:#e9e9e9;border-top:2px solid #dadada}
.abar{display:flex;align-items:center;height:50px;background:#fff;padding:0 35.5px 0 107px;color:#666}
.desk .abar{height:51px;border-bottom:2px solid #dedede;padding-right:36px}
.badge{display:inline-block;flex:none;width:22px;height:22px;border-radius:50%;background:#f26a2e;color:#fff;text-align:center;font-size:12px;line-height:22px}
.abar .badge{margin:-3px 9px 0 0}
.abar-t{font-size:12.2px;margin-top:-3px}
.abtns{margin-left:auto;display:flex;align-items:center;gap:12px;margin-top:2px}
.abtns button{width:114px;height:27px;border:1px solid #8c8c8c;border-bottom-width:2px;font-size:10px;color:#777}
.bwrap{padding:6px 7px;margin-right:-6px;height:39px;width:129px}

.phone{width:242px;height:1851px;margin-left:31px;border:1px solid #cfcfcf;background:#fafafa;display:flex;flex-direction:column}
.mhead{display:flex;align-items:center;height:40px;padding:6px 0 0 11px;background:#fff;color:#555;flex:none}
.m-done{width:38px}.m-sel{width:36px}.m-car{width:25px;margin-left:3px}.m-n{width:38px}
.m-view{width:54px;height:27px;margin-top:-5px;background:#3d3d3d;color:#ddd;text-align:center;line-height:26px}
.m-dots{flex:none;margin:-2px 0 0 19px;font-size:10px;letter-spacing:.4px;color:#222}
.msec{height:52px;flex:none;display:flex;align-items:flex-end;gap:13px;padding:0 0 12px 11px;color:#555;line-height:16px}
.msec.tall{height:58px}
.mband{height:24px;flex:none;background:#e4e4e4;padding-left:8px;line-height:23px;color:#555}
.mrow{height:45.8px;flex:none;background:#fff;border-bottom:1px solid #f0f0f0;display:flex;align-items:center;padding:0 8px 0 11px;gap:13px;color:#555}
.mrow.three{height:57px}
.mrow .r{margin-left:auto;text-align:right}
.mlegal{margin:auto 0 9px 12px}

.note{display:flex;margin-left:52.5px}
.note .badge{width:23px;height:23px;margin:3.5px 18.5px 0 0;line-height:23px}
.note em{color:#e8693a}
.n2{margin-top:40px}.n3{margin-top:61.7px}.n4{margin-top:62px}.n5{margin-top:61.6px}
.mock{margin-left:27px;width:995px;border-top:2px solid #c6c6c6;color:#555;font-size:10.5px;line-height:15px}
.m2{margin-top:21px}.m3{margin-top:23px}.m4{margin-top:42px}
.mock-body{display:flex;margin:0 10.5px;height:393px}
.mock-side{width:97px;background:#e9e9e9}
.mock-main{flex:1;background:#fafafa;padding:8px 0 0 24px}
.mock-main h3{margin:0 0 10px 2px}
.mock .abar{margin:0 10.5px;padding-left:107px}

.mobiles{display:grid;grid-template-columns:repeat(3,243px);column-gap:47.5px;margin:41.5px 0 0 94px}
.mlabel{font-size:10.6px;line-height:15px;color:#444;margin-bottom:31px}
.ophone{position:relative;height:498px;overflow:hidden;background:#8a8a8a;border:1px solid #b2b2b2;display:flex;flex-direction:column;font-size:10.5px;line-height:15px;color:#2e2e2e}
.ophone .mhead{background:transparent;color:#333;height:37px;padding-top:8px}
.ophone .m-view{background:#333;color:#bbb}
.ophone .mband{background:#777;color:#2e2e2e}
.ophone .mrow{background:#8a8a8a;border-bottom:1px solid #828282;color:#2e2e2e;height:46.2px}
.ophone .cb{background:#777}
.sheet{position:absolute;left:0;right:0;bottom:0;height:45px;background:#fff;color:#555;padding:0 2px 2px}
.sheet.tall2{height:104px;padding-top:10px}
.sheet.tall1{height:77px;padding-top:11px}
.sheet-i{height:29px;line-height:29px;padding-left:10px}
.sheet-x{height:40px;line-height:42px;padding-left:9px;margin-top:2px}
.sheet.tall2 .sheet-x,.sheet.tall1 .sheet-x{height:36px;line-height:34px;margin-top:0}
```
